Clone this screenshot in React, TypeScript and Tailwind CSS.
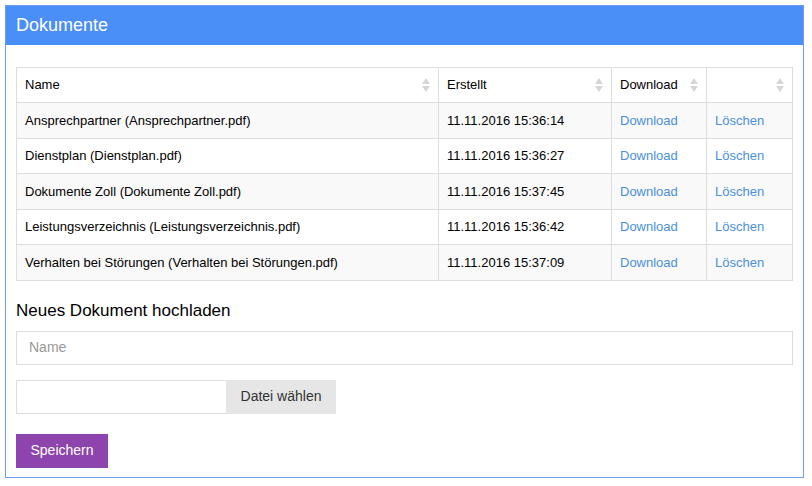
import React from 'react'

const docs = [
  { name: 'Ansprechpartner (Ansprechpartner.pdf)', date: '11.11.2016 15:36:14' },
  { name: 'Dienstplan (Dienstplan.pdf)', date: '11.11.2016 15:36:27' },
  { name: 'Dokumente Zoll (Dokumente Zoll.pdf)', date: '11.11.2016 15:37:45' },
  { name: 'Leistungsverzeichnis (Leistungsverzeichnis.pdf)', date: '11.11.2016 15:36:42' },
  { name: 'Verhalten bei Störungen (Verhalten bei Störungen.pdf)', date: '11.11.2016 15:37:09' },
]

const SortIcon = () => (
  <svg width="8" height="14" viewBox="0 0 8 14" className="absolute right-2 top-1/2 -translate-y-1/2">
    <path d="M4 0 L8 6 L0 6 Z" fill="#d6d6d6" />
    <path d="M0 8 L8 8 L4 14 Z" fill="#d6d6d6" />
  </svg>
)

const Th: React.FC<{ children?: React.ReactNode; className?: string }> = ({ children, className }) => (
  <th className={`relative border border-[#dddddd] px-2 h-[35px] text-left font-normal text-[13px] text-black ${className ?? ''}`}>
    {children}
    <SortIcon />
  </th>
)

export default function App() {
  return (
    <div className="w-[812px] h-[486px] bg-white p-[5px] pr-[8px] font-['Liberation_Sans',Arial,sans-serif]">
      <div className="border border-[#6a9ff5] h-[473px] flex flex-col">
        <div className="bg-[#4a8ef7] h-[39px] flex items-center px-[10px] text-white text-[18px]">
          Dokumente
        </div>
        <div className="px-[10px] pt-[22px]">
          <table className="w-full border-collapse">
            <thead>
              <tr>
                <Th className="w-[422px]">Name</Th>
                <Th className="w-[173px]">Erstellt</Th>
                <Th className="w-[95px]">Download</Th>
                <Th />
              </tr>
            </thead>
            <tbody>
              {docs.map((d, i) => (
                <tr key={d.name} className={i % 2 === 0 ? 'bg-[#f9f9f9]' : 'bg-white'}>
                  <td className="border border-[#dddddd] px-2 h-[35.6px] text-[13px] text-black">{d.name}</td>
                  <td className="border border-[#dddddd] px-2 text-[13px] text-black">{d.date}</td>
                  <td className="border border-[#dddddd] px-2 text-[13px] text-[#4a90d9]">Download</td>
                  <td className="border border-[#dddddd] px-2 text-[13px] text-[#4a90d9]">Löschen</td>
                </tr>
              ))}
            </tbody>
          </table>

          <h3 className="mt-[20px] text-[17px] text-black leading-[20px]">Neues Dokument hochladen</h3>
          <div className="mt-[10px] h-[34px] border border-[#dddddd] flex items-center px-[12px] text-[14px] text-[#999999]">
            Name
          </div>
          <div className="mt-[15px] flex h-[34px]">
            <div className="w-[210px] border border-[#dddddd] border-r-0" />
            <div className="w-[110px] bg-[#e6e6e6] flex items-center justify-center text-[14px] text-[#333333]">
              Datei wählen
            </div>
          </div>
          <button className="mt-[20px] h-[34px] w-[92px] bg-[#8e44ad] text-white text-[14px]">
            Speichern
          </button>
        </div>
      </div>
    </div>
  )
}
